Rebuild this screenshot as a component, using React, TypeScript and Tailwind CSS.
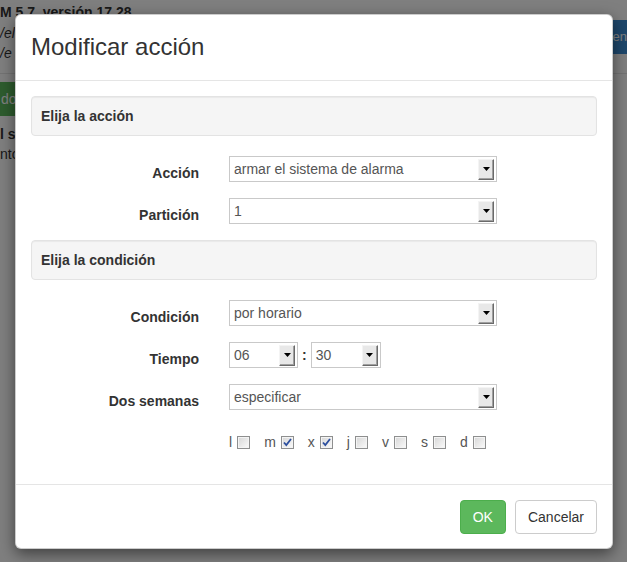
import React from "react";

const FONT = "font-['Liberation_Sans',Arial,sans-serif]";

const Select = ({ value, width }: { value: string; width: string }) => (
  <div className={`flex h-[26px] items-center border border-[#c9c9c9] bg-white pl-[4px] pr-[2px] ${width}`}>
    <span className="flex-1 text-[14px] leading-5 text-[#555]">{value}</span>
    <span className="flex h-[21px] w-[16px] items-center justify-center border border-b-[#6a6a6a] border-l-[#f4f4f4] border-r-[#6a6a6a] border-t-[#f4f4f4] bg-[#e8e8e8] shadow-[inset_-1px_-1px_0_#a0a0a0]">
      <svg width="7" height="4" viewBox="0 0 7 4">
        <path d="M0 0h7L3.5 4z" fill="#000" />
      </svg>
    </span>
  </div>
);

const Check = ({ checked }: { checked?: boolean }) => (
  <span className="relative inline-flex h-[13px] w-[13px] items-center justify-center border border-[#8e8f8f] bg-gradient-to-br from-[#d6d6d6] to-[#fbfbfb] shadow-[inset_0_0_0_1px_#f4f4f4]">
    {checked && (
      <svg width="9" height="9" viewBox="0 0 9 9">
        <path d="M1 4.5l2.3 2.6L8 1" fill="none" stroke="#2c4f9e" strokeWidth="1.8" />
      </svg>
    )}
  </span>
);

const Row = ({ label, children }: { label: string; children: React.ReactNode }) => (
  <div className="mb-[15px] flex items-start">
    <label className="w-[168px] pt-[7px] text-right text-[14px] font-bold leading-5 text-[#333]">{label}</label>
    <div className="ml-[30px]">{children}</div>
  </div>
);

const Well = ({ title }: { title: string }) => (
  <div className="mb-[20px] rounded-[4px] border border-[#e3e3e3] bg-[#f5f5f5] p-[9px] shadow-[inset_0_1px_1px_rgba(0,0,0,0.05)]">
    <h5 className="text-[14px] font-bold leading-5 text-[#333]">{title}</h5>
  </div>
);

const days = [
  { d: "l", on: false },
  { d: "m", on: true },
  { d: "x", on: true },
  { d: "j", on: false },
  { d: "v", on: false },
  { d: "s", on: false },
  { d: "d", on: false },
];

export default function App() {
  return (
    <div className={`relative h-[562px] w-[627px] overflow-hidden bg-white ${FONT}`}>
      {/* page behind the dialog */}
      <div className="text-[14px] leading-5 text-[#333]">
        <div className="flex">
          <div className="pt-[2px]">
            <p className="font-bold">M 5.7, versión 17.28</p>
            <div className="mt-[1px] italic">
              <p>/el</p>
              <p>/e ...</p>
            </div>
          </div>
          <button className="ml-auto mt-[20px] flex h-[34px] w-[26px] items-center justify-end rounded-l-[4px] bg-[#3d8fd6] text-[13px] text-white">
            een
          </button>
        </div>
        <div className="mt-[10px] border-t border-[#e6e6e6]" />
        <button className="mt-[8px] h-[34px] rounded-r-[4px] bg-[#5cb85c] pl-[1px] pr-[12px] text-white">do</button>
        <p className="mt-[8px] font-bold">l s</p>
        <p>nto</p>
      </div>

      {/* backdrop */}
      <div className="absolute inset-0 bg-black/50" />

      {/* dialog */}
      <div className="absolute left-[15px] top-[14px] w-[598px] rounded-[6px] border border-black/20 bg-white shadow-[0_5px_15px_rgba(0,0,0,0.5)]">
        <div className="h-[66px] border-b border-[#e5e5e5] px-[15px] pt-[15px]">
          <h4 className="text-[24px] leading-[33px] text-[#333]">Modificar acción</h4>
        </div>

        <div className="px-[15px] pb-[15px] pt-[15px]">
          <Well title="Elija la acción" />
          <Row label="Acción">
            <Select value="armar el sistema de alarma" width="w-[268px]" />
          </Row>
          <Row label="Partición">
            <Select value="1" width="w-[268px]" />
          </Row>

          <Well title="Elija la condición" />
          <Row label="Condición">
            <Select value="por horario" width="w-[268px]" />
          </Row>
          <Row label="Tiempo">
            <div className="flex items-center">
              <Select value="06" width="w-[69px]" />
              <span className="mx-[4px] text-[14px] font-bold leading-5 text-[#333]">:</span>
              <Select value="30" width="w-[70px]" />
            </div>
          </Row>
          <Row label="Dos semanas">
            <Select value="especificar" width="w-[268px]" />
          </Row>

          <div className="mb-[17px] ml-[198px] flex items-center pt-[6px] text-[14px] leading-5 text-[#555]">
            {days.map(x => (
              <label key={x.d} className="mr-[14px] inline-flex items-center gap-[5px]">
                <span>{x.d}</span>
                <Check checked={x.on} />
              </label>
            ))}
          </div>
        </div>

        <div className="flex justify-end gap-[9px] border-t border-[#e5e5e5] px-[15px] pb-[14px] pt-[15px] text-[14px] leading-5">
          <button className="h-[34px] rounded-[4px] border border-[#4cae4c] bg-[#5cb85c] px-[12px] text-white">OK</button>
          <button className="h-[34px] rounded-[4px] border border-[#ccc] bg-white px-[12px] text-[#333]">Cancelar</button>
        </div>
      </div>
    </div>
  );
}
